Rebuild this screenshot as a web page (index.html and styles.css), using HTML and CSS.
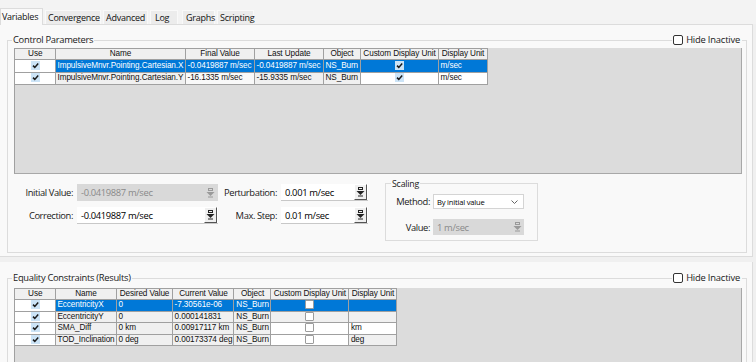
FILE: index.html
```html
<!DOCTYPE html>
<html>
<head>
<meta charset="utf-8">
<link rel="stylesheet" href="styles.css">
</head>
<body>
<div class="tabs">
  <div class="tab active">Variables</div>
  <div class="tab t-conv">Convergence</div>
  <div class="tab t-adv">Advanced</div>
  <div class="tab t-log">Log</div>
  <div class="tab t-gr">Graphs</div>
  <div class="tab t-scr">Scripting</div>
</div>

<div class="page top">
  <div class="group g-top">
    <span class="legend">Control Parameters</span>
    <label class="hide"><span class="cb"></span>Hide Inactive</label>
    <div class="grid g1">
      <table class="tbl">
        <colgroup>
          <col class="w40"><col class="w130"><col class="w69"><col class="w69"><col class="w37"><col class="w78"><col class="w49">
        </colgroup>
        <tr class="hd"><th>Use</th><th>Name</th><th>Final Value</th><th>Last Update</th><th>Object</th><th>Custom Display Unit</th><th>Display Unit</th></tr>
        <tr class="sel">
          <td class="use"><span class="chk on"><svg viewBox="0 0 9 9" width="9" height="9"><path d="M2 4.6 L3.8 6.4 L7.2 2.6" fill="none" stroke="#1b1b1b" stroke-width="1.5"/></svg></span></td>
          <td>ImpulsiveMnvr.Pointing.Cartesian.X</td><td>-0.0419887 m/sec</td><td>-0.0419887 m/sec</td><td>NS_Burn</td>
          <td class="ctr"><span class="chk on"><svg viewBox="0 0 9 9" width="9" height="9"><path d="M2 4.6 L3.8 6.4 L7.2 2.6" fill="none" stroke="#1b1b1b" stroke-width="1.5"/></svg></span></td>
          <td>m/sec</td>
        </tr>
        <tr>
          <td class="use"><span class="chk on"><svg viewBox="0 0 9 9" width="9" height="9"><path d="M2 4.6 L3.8 6.4 L7.2 2.6" fill="none" stroke="#1b1b1b" stroke-width="1.5"/></svg></span></td>
          <td class="ro">ImpulsiveMnvr.Pointing.Cartesian.Y</td><td>-16.1335 m/sec</td><td class="ro">-15.9335 m/sec</td><td class="ro">NS_Burn</td>
          <td class="ctr wh"><span class="chk on"><svg viewBox="0 0 9 9" width="9" height="9"><path d="M2 4.6 L3.8 6.4 L7.2 2.6" fill="none" stroke="#1b1b1b" stroke-width="1.5"/></svg></span></td>
          <td class="wh">m/sec</td>
        </tr>
      </table>
    </div>

    <div class="form">
      <div class="fields">
        <span class="lbl">Initial Value:</span>
        <div class="field dis"><span class="val">-0.0419887 m/sec</span><span class="spin dis"><svg viewBox="0 0 9 10" width="9" height="10"><rect x="2.5" y="0.5" width="4" height="2" fill="none" stroke="#9a9a9a"/><path d="M0.5 4 H8.5 L4.5 8 Z" fill="#9a9a9a"/><rect x="2" y="8.5" width="5" height="1" fill="#9a9a9a"/></svg></span></div>
        <span class="lbl">Perturbation:</span>
        <div class="field"><span class="val">0.001 m/sec</span><span class="spin"><svg viewBox="0 0 9 10" width="9" height="10"><rect x="2.5" y="0.5" width="4" height="2" fill="none" stroke="#222"/><path d="M0.5 4 H8.5 L4.5 8 Z" fill="#222"/><rect x="2" y="8.5" width="5" height="1" fill="#222"/></svg></span></div>
        <span class="lbl">Correction:</span>
        <div class="field"><span class="val">-0.0419887 m/sec</span><span class="spin"><svg viewBox="0 0 9 10" width="9" height="10"><rect x="2.5" y="0.5" width="4" height="2" fill="none" stroke="#222"/><path d="M0.5 4 H8.5 L4.5 8 Z" fill="#222"/><rect x="2" y="8.5" width="5" height="1" fill="#222"/></svg></span></div>
        <span class="lbl">Max. Step:</span>
        <div class="field"><span class="val">0.01 m/sec</span><span class="spin"><svg viewBox="0 0 9 10" width="9" height="10"><rect x="2.5" y="0.5" width="4" height="2" fill="none" stroke="#222"/><path d="M0.5 4 H8.5 L4.5 8 Z" fill="#222"/><rect x="2" y="8.5" width="5" height="1" fill="#222"/></svg></span></div>
      </div>

      <div class="group scaling">
        <span class="legend sm">Scaling</span>
        <div class="srow">
          <span class="lbl s">Method:</span>
          <div class="select"><span class="val small">By initial value</span><svg class="caret" viewBox="0 0 7 4" width="7" height="4"><path d="M0.5 0.5 L3.5 3.5 L6.5 0.5" fill="none" stroke="#666"/></svg></div>
        </div>
        <div class="srow r2">
          <span class="lbl s">Value:</span>
          <div class="field dis sf"><span class="val">1 m/sec</span><span class="spin dis flat"><svg viewBox="0 0 9 10" width="9" height="10"><rect x="2.5" y="0.5" width="4" height="2" fill="none" stroke="#9a9a9a"/><path d="M0.5 4 H8.5 L4.5 8 Z" fill="#9a9a9a"/><rect x="2" y="8.5" width="5" height="1" fill="#9a9a9a"/></svg></span></div>
        </div>
      </div>
    </div>
  </div>
</div>

<div class="page bottom">
  <div class="group g-bot">
    <span class="legend">Equality Constraints (Results)</span>
    <label class="hide"><span class="cb"></span>Hide Inactive</label>
    <div class="grid g2">
      <table class="tbl t2">
        <colgroup>
          <col class="w40"><col class="w60"><col class="w56"><col class="w61"><col class="w36"><col class="w78"><col class="w48">
        </colgroup>
        <tr class="hd"><th>Use</th><th>Name</th><th>Desired Value</th><th>Current Value</th><th>Object</th><th>Custom Display Unit</th><th>Display Unit</th></tr>
        <tr class="sel">
          <td class="use"><span class="chk on"><svg viewBox="0 0 9 9" width="9" height="9"><path d="M2 4.6 L3.8 6.4 L7.2 2.6" fill="none" stroke="#1b1b1b" stroke-width="1.5"/></svg></span></td>
          <td>EccentricityX</td><td>0</td><td>-7.30561e-06</td><td>NS_Burn</td>
          <td class="ctr"><span class="chk off"></span></td><td></td>
        </tr>
        <tr>
          <td class="use"><span class="chk on"><svg viewBox="0 0 9 9" width="9" height="9"><path d="M2 4.6 L3.8 6.4 L7.2 2.6" fill="none" stroke="#1b1b1b" stroke-width="1.5"/></svg></span></td>
          <td class="ro">EccentricityY</td><td class="ro">0</td><td class="ro">0.000141831</td><td class="ro">NS_Burn</td>
          <td class="ctr ro"><span class="chk off"></span></td><td class="ro"></td>
        </tr>
        <tr>
          <td class="use"><span class="chk on"><svg viewBox="0 0 9 9" width="9" height="9"><path d="M2 4.6 L3.8 6.4 L7.2 2.6" fill="none" stroke="#1b1b1b" stroke-width="1.5"/></svg></span></td>
          <td class="ro">SMA_Diff</td><td class="ro">0 km</td><td class="ro">0.00917117 km</td><td class="ro">NS_Burn</td>
          <td class="ctr wh"><span class="chk off"></span></td><td class="wh">km</td>
        </tr>
        <tr>
          <td class="use"><span class="chk on"><svg viewBox="0 0 9 9" width="9" height="9"><path d="M2 4.6 L3.8 6.4 L7.2 2.6" fill="none" stroke="#1b1b1b" stroke-width="1.5"/></svg></span></td>
          <td class="ro">TOD_Inclination</td><td class="ro">0 deg</td><td class="ro">0.00173374 deg</td><td class="ro">NS_Burn</td>
          <td class="ctr wh"><span class="chk off"></span></td><td class="ro">deg</td>
        </tr>
      </table>
    </div>
  </div>
</div>
</body>
</html>
```

FILE: styles.css
```css
* { box-sizing: border-box; }
html, body { margin: 0; padding: 0; }
body {
  width: 756px;
  height: 362px;
  overflow: hidden;
  background: #f0f0f0;
  font-family: "Open Sans", "Noto Sans", sans-serif;
  font-size: 9px;
  color: #000;
}

/* tabs */
.tabs {
  height: 24px;
  display: flex;
  align-items: flex-end;
  background: #f3f3f3;
  position: relative;
  z-index: 2;
}
.tab {
  height: 14px;
  line-height: 13px;
  padding: 0 2px;
  margin-right: 2px;
  background: #ececec;
  border: 1px solid #f9f9f9;
  border-bottom: none;
  font-size: 9px;
  letter-spacing: -0.25px;
  white-space: nowrap;
  color: #111;
}
.tab.active {
  height: 17px;
  line-height: 15px;
  background: #f9f9f9;
  border: 1px solid #dcdcdc;
  border-bottom: none;
  margin-bottom: -1px;
  width: 43px;
  padding-left: 1px;
}
.t-conv { width: 56px; }
.t-adv { width: 45px; }
.t-log { width: 28px; margin-right: 4px; padding-left: 4px; }
.t-gr { width: 33px; padding-left: 3px; }
.t-scr { width: 37px; }

/* pages */
.page {
  background: #f9f9f9;
  width: 753px;
  border-right: 1px solid #dcdcdc;
}
.page.top {
  height: 233px;
  border-top: 1px solid #dcdcdc;
  border-bottom: 1px solid #dcdcdc;
  padding-top: 15px;
}
.page.bottom {
  margin-top: 5px;
  height: 100px;
  padding-top: 16px;
}

/* group boxes */
.group {
  position: relative;
  border: 1px solid #dcdcdc;
  margin-left: 7px;
  width: 740px;
}
.g-top { height: 213px; padding: 7px 0 0 6px; }
.g-bot { height: 84px; padding: 9px 0 0 6px; border-bottom: none; }
.legend {
  position: absolute;
  left: 4px;
  top: -7px;
  padding: 0 1px;
  background: #f9f9f9;
  font-size: 9.4px;
  letter-spacing: -0.3px;
  line-height: 12px;
  color: #1a1a1a;
  white-space: nowrap;
}
.legend.sm { font-size: 8.8px; left: 5px; top: -6px; letter-spacing: -0.2px; }
.hide {
  position: absolute;
  right: 4px;
  top: -7px;
  display: flex;
  align-items: center;
  padding: 0 2px 0 1px;
  background: #f9f9f9;
  font-size: 9.4px;
  letter-spacing: -0.2px;
  line-height: 12px;
  color: #1a1a1a;
}
.hide .cb {
  width: 10px;
  height: 10px;
  border: 1px solid #333;
  border-radius: 2px;
  background: #fff;
  margin-right: 3px;
}

/* grids */
.grid {
  width: 728px;
  background: #dcdcdc;
  border: 1px solid #a8a8a8;
  border-top: none;
  border-left: 1px solid #a0a0a0;
}
.g1 { height: 126px; }
.g2 { height: 75px; border-bottom: none; }
.tbl {
  border-collapse: collapse;
  table-layout: fixed;
  font-family: "Liberation Sans", Arial, sans-serif;
  font-size: 8.2px;
  letter-spacing: -0.1px;
  color: #111;
}
.tbl th, .tbl td {
  border: 1px solid #a0a0a0;
  height: 12.5px;
  padding: 0 1px 0 2px;
  white-space: nowrap;
  overflow: hidden;
  line-height: 10px;
  text-align: left;
  font-weight: normal;
}
.tbl th { background: #f0f0f0; text-align: center; height: 11px; border-top: 1px solid #a0a0a0; }
.tbl td { background: #f9f9f9; }
.tbl td.ro { background: #f0f0f0; }
.tbl td.wh { background: #fff; }
.tbl tr.sel td { background: #0078d7; color: #fff; }
.tbl tr td.use, .tbl tr.sel td.use { background: #fff; text-align: center; }
.t2 th { height: 11px; }
.t2 td { height: 11.5px; }
.tbl td.ctr { text-align: center; }
.tbl tr:first-child th:first-child { border-left: none; }
.tbl td:first-child { border-left: none; }
.w40 { width: 40px; } .w130 { width: 130px; } .w69 { width: 69px; } .w37 { width: 37px; }
.w78 { width: 78px; } .w49 { width: 49px; } .w60 { width: 60px; } .w56 { width: 56px; }
.w61 { width: 61px; } .w36 { width: 36px; } .w48 { width: 48px; }

.chk {
  display: inline-block;
  width: 9px;
  height: 9px;
  vertical-align: middle;
  position: relative;
  top: -0.5px;
}
.chk svg { display: block; }
.chk.on { background: #cce4f7; }
.chk.off { background: #fff; border: 1px solid #9c9c9c; border-radius: 1px; }

/* form */
.form {
  display: flex;
  margin-top: 9px;
  margin-left: -6px;
}
.fields {
  display: grid;
  grid-template-columns: 65px 141px 55px 87px;
  grid-auto-rows: 17px;
  column-gap: 4px;
  row-gap: 6px;
  margin-top: 1px;
  align-items: center;
}
.lbl {
  text-align: right;
  font-size: 9.4px;
  letter-spacing: -0.4px;
  color: #1a1a1a;
  white-space: nowrap;
}
.field {
  height: 17px;
  background: #fff;
  display: flex;
  align-items: center;
  justify-content: space-between;
  border-bottom: 1px solid #c8c8c8;
}
.field.dis { background: #d9d9d9; border-bottom: none; color: #8a8a8a; }
.val {
  padding-left: 4px;
  font-size: 9.4px;
  letter-spacing: -0.35px;
  white-space: nowrap;
}
.spin {
  width: 13px;
  height: 16px;
  margin-right: 1px;
  background: #f0f0f0;
  border-left: 1px solid #fff;
  border-top: 1px solid #fff;
  border-right: 1px solid #555;
  border-bottom: 1px solid #555;
  display: flex;
  align-items: center;
  justify-content: center;
}
.spin.dis { background: #d9d9d9; border: none; }

.scaling {
  margin-left: 17px;
  width: 153px;
  height: 58px;
  padding: 10px 0 0 0;
}
.srow {
  display: flex;
  align-items: center;
  gap: 3px;
}
.srow.r2 { margin-top: 10px; }
.lbl.s { width: 44px; }
.select {
  width: 91px;
  height: 15px;
  background: #fff;
  border: 1px solid #d4d4d4;
  display: flex;
  align-items: center;
  justify-content: space-between;
  padding-right: 5px;
}
.val.small { font-size: 7.6px; padding-left: 3px; letter-spacing: -0.2px; }
.sf { width: 91px; height: 16px; }
.spin.flat { width: 12px; height: 14px; }
```
